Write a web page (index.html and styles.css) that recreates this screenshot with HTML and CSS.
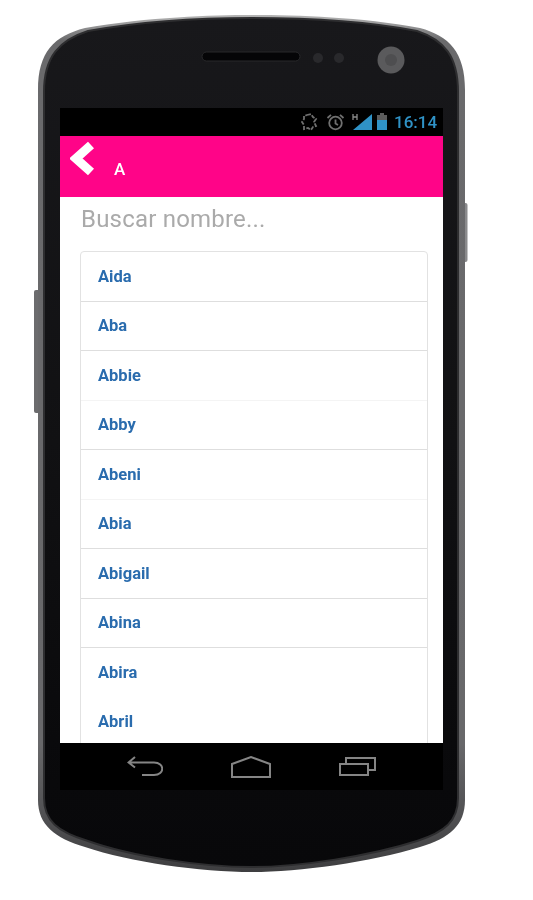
FILE: index.html
```html
<!DOCTYPE html>
<html lang="es">
<head>
    <meta charset="UTF-8">
    <title>Nombres</title>
    <link rel="stylesheet" href="styles.css">
</head>
<body>
    <div class="page">
        <!-- phone body -->
        <svg class="phone" width="533" height="900" viewBox="0 0 533 900">
            <defs>
                <linearGradient id="rim" x1="0" y1="0" x2="0" y2="1">
                    <stop offset="0" stop-color="#b4b4b4"/>
                    <stop offset="0.03" stop-color="#6a6a6c"/>
                    <stop offset="0.85" stop-color="#68686a"/>
                    <stop offset="1" stop-color="#3e3e40"/>
                </linearGradient>
                <linearGradient id="bezel" x1="0" y1="0" x2="0" y2="1">
                    <stop offset="0" stop-color="#18181b"/>
                    <stop offset="0.5" stop-color="#111113"/>
                    <stop offset="0.9" stop-color="#09090b"/>
                    <stop offset="1" stop-color="#08080a"/>
                </linearGradient>
            </defs>
            <rect x="34" y="290" width="6" height="123" rx="2" fill="#6c6c6e"/>
            <rect x="463" y="203" width="4.5" height="59" rx="2" fill="#8a8a8c"/>
            <path fill="url(#rim)" d="M38 90 C38 52 54 36 85 28 C150 17 210 15 252 15 C300 15 360 17 420 28 C449 36 465 52 465 90 L465 800 C465 825 450 838 420 847 C370 862 300 872 252 872 C200 872 130 862 85 847 C55 838 38 825 38 800 Z"/>
            <path fill="url(#bezel)" stroke="#2e2e30" stroke-width="2" d="M44 92 C44 56 60 40 88 31 C150 20 210 18 252 18 C300 18 360 20 417 31 C444 40 458 56 458 92 L458 798 C458 821 445 832 417 841 C370 856 300 867 252 867 C200 867 130 856 88 841 C58 832 44 821 44 798 Z"/>
            <rect x="202" y="52" width="98" height="9" rx="4.5" fill="#050507" stroke="#29292b"/>
            <circle cx="318" cy="58" r="5" fill="#29292c"/>
            <circle cx="339" cy="58" r="5" fill="#29292c"/>
            <circle cx="391" cy="60" r="13.5" fill="#5a5a5c"/>
            <circle cx="391" cy="60" r="6" fill="#4e4e50"/>
        </svg>

        <div class="screen">
            <div class="status-bar">
                <svg class="status-icon bell" width="18" height="18" viewBox="0 0 18 18">
                    <path d="M7 2 L11 1 L13 4 L16 6 L14 9 L16 13 L13 14 L11 17 L8 15 L4 16 L4 12 L2 9 L4 6 L4 3 Z" fill="none" stroke="#707070" stroke-width="1.8" stroke-dasharray="4 1.5"/>
                </svg>
                <svg class="status-icon" width="19" height="18" viewBox="0 0 19 18">
                    <circle cx="9.5" cy="10" r="6.3" fill="none" stroke="#707070" stroke-width="1.8"/>
                    <path d="M9.5 6.5 V10.5 L12 12 M1.5 5 L5 1.8 M17.5 5 L14 1.8" fill="none" stroke="#707070" stroke-width="1.8"/>
                </svg>
                <svg class="status-icon signal" width="20" height="18" viewBox="0 0 20 18">
                    <path d="M1 17 L20 1 V17 Z" fill="#2f92c6"/>
                    <path d="M1 1 V7 M5 1 V7 M1 4 H5" stroke="#8a8a8a" stroke-width="1.3" fill="none"/>
                </svg>
                <svg class="status-icon battery" width="12" height="18" viewBox="0 0 12 18">
                    <rect x="4" y="0" width="4" height="2" fill="#5c5c5c"/>
                    <rect x="1" y="2" width="10" height="5" fill="#5c5c5c"/>
                    <rect x="1" y="7" width="10" height="10" fill="#2f92c6"/>
                </svg>
                <span class="clock">16:14</span>
            </div>

            <div class="app-bar">
                <svg class="back" width="26" height="38" viewBox="0 0 26 38">
                    <path d="M21 5 L6 18.5 L21 32" fill="none" stroke="#fff" stroke-width="9"/>
                </svg>
                <span class="app-title">A</span>
            </div>

            <div class="content">
                <div class="search">Buscar nombre...</div>
                <ul class="names">
                    <li><a>Aida</a></li>
                    <li><a>Aba</a></li>
                    <li class="faint"><a>Abbie</a></li>
                    <li><a>Abby</a></li>
                    <li class="faint"><a>Abeni</a></li>
                    <li><a>Abia</a></li>
                    <li><a>Abigail</a></li>
                    <li><a>Abina</a></li>
                    <li class="plain"><a>Abira</a></li>
                    <li><a>Abril</a></li>
                </ul>
            </div>

            <div class="nav-bar">
                <svg width="36" height="20" viewBox="0 0 36 20">
                    <path d="M8 1 L1.5 6.5 L8 11.5 M2 6.5 H27 C38 6.5 38 19 27 19 H15" fill="none" stroke="#858585" stroke-width="2"/>
                </svg>
                <svg width="40" height="22" viewBox="0 0 40 22">
                    <path d="M1 8 L20 1 L39 8 V21 H1 Z" fill="none" stroke="#858585" stroke-width="2"/>
                </svg>
                <svg width="37" height="20" viewBox="0 0 37 20">
                    <path d="M1 8 H29 V19 H1 Z M7 7 V2 H36 V14 H30" fill="none" stroke="#858585" stroke-width="2"/>
                </svg>
            </div>
        </div>
    </div>
</body>
</html>
```

FILE: styles.css
```css
*{
    margin: 0;
    padding: 0;
    box-sizing: border-box;
}

body{
    background-color: #fff;
    font-family: Roboto, "Liberation Sans", sans-serif;
}

.page{
    position: relative;
    width: 533px;
    height: 900px;
    overflow: hidden;
    padding: 108px 0 0 60px;
    filter: blur(0.6px);
}

.phone{
    position: absolute;
    top: 0;
    left: 0;
}

.screen{
    position: relative;
    width: 383px;
    height: 682px;
    display: flex;
    flex-direction: column;
    background-color: #000;
}

.status-bar{
    height: 28px;
    flex: none;
    display: flex;
    align-items: center;
    padding-left: 240px;
}

.status-icon{
    margin-right: 7px;
    flex: none;
}

.status-icon.bell{
    margin-right: 8px;
}

.status-icon.signal{
    margin-right: 4px;
}

.status-icon.battery{
    margin-right: 6px;
}

.clock{
    font-size: 17px;
    font-weight: 500;
    color: #2f92c6;
}

.app-bar{
    height: 61px;
    flex: none;
    display: flex;
    align-items: flex-start;
    background-color: #ff0488;
    padding: 4px 0 0 10px;
}

.app-title{
    margin: 19px 0 0 18px;
    font-size: 17px;
    font-weight: 500;
    color: #fff;
}

.content{
    height: 546px;
    flex: none;
    overflow: hidden;
    background-color: #fff;
}

.search{
    height: 54px;
    padding: 8px 0 0 21px;
    font-size: 24px;
    line-height: 28px;
    letter-spacing: 0.2px;
    color: #aaa;
}

.names{
    list-style-type: none;
    width: 348px;
    margin-left: 20px;
    border: 1px solid #e2e2e2;
    border-radius: 4px;
}

.names li{
    height: 49.5px;
    padding-left: 17px;
    display: flex;
    align-items: center;
    border-bottom: 1px solid #dedede;
}

.names li.faint{
    border-bottom-color: #f4f4f4;
}

.names li.plain{
    border-bottom-color: transparent;
}

.names a{
    font-size: 16.5px;
    font-weight: 700;
    color: #2a6cae;
}

.nav-bar{
    flex: 1;
    display: flex;
    align-items: flex-start;
    gap: 68px;
    padding: 13px 0 0 67px;
}
```
